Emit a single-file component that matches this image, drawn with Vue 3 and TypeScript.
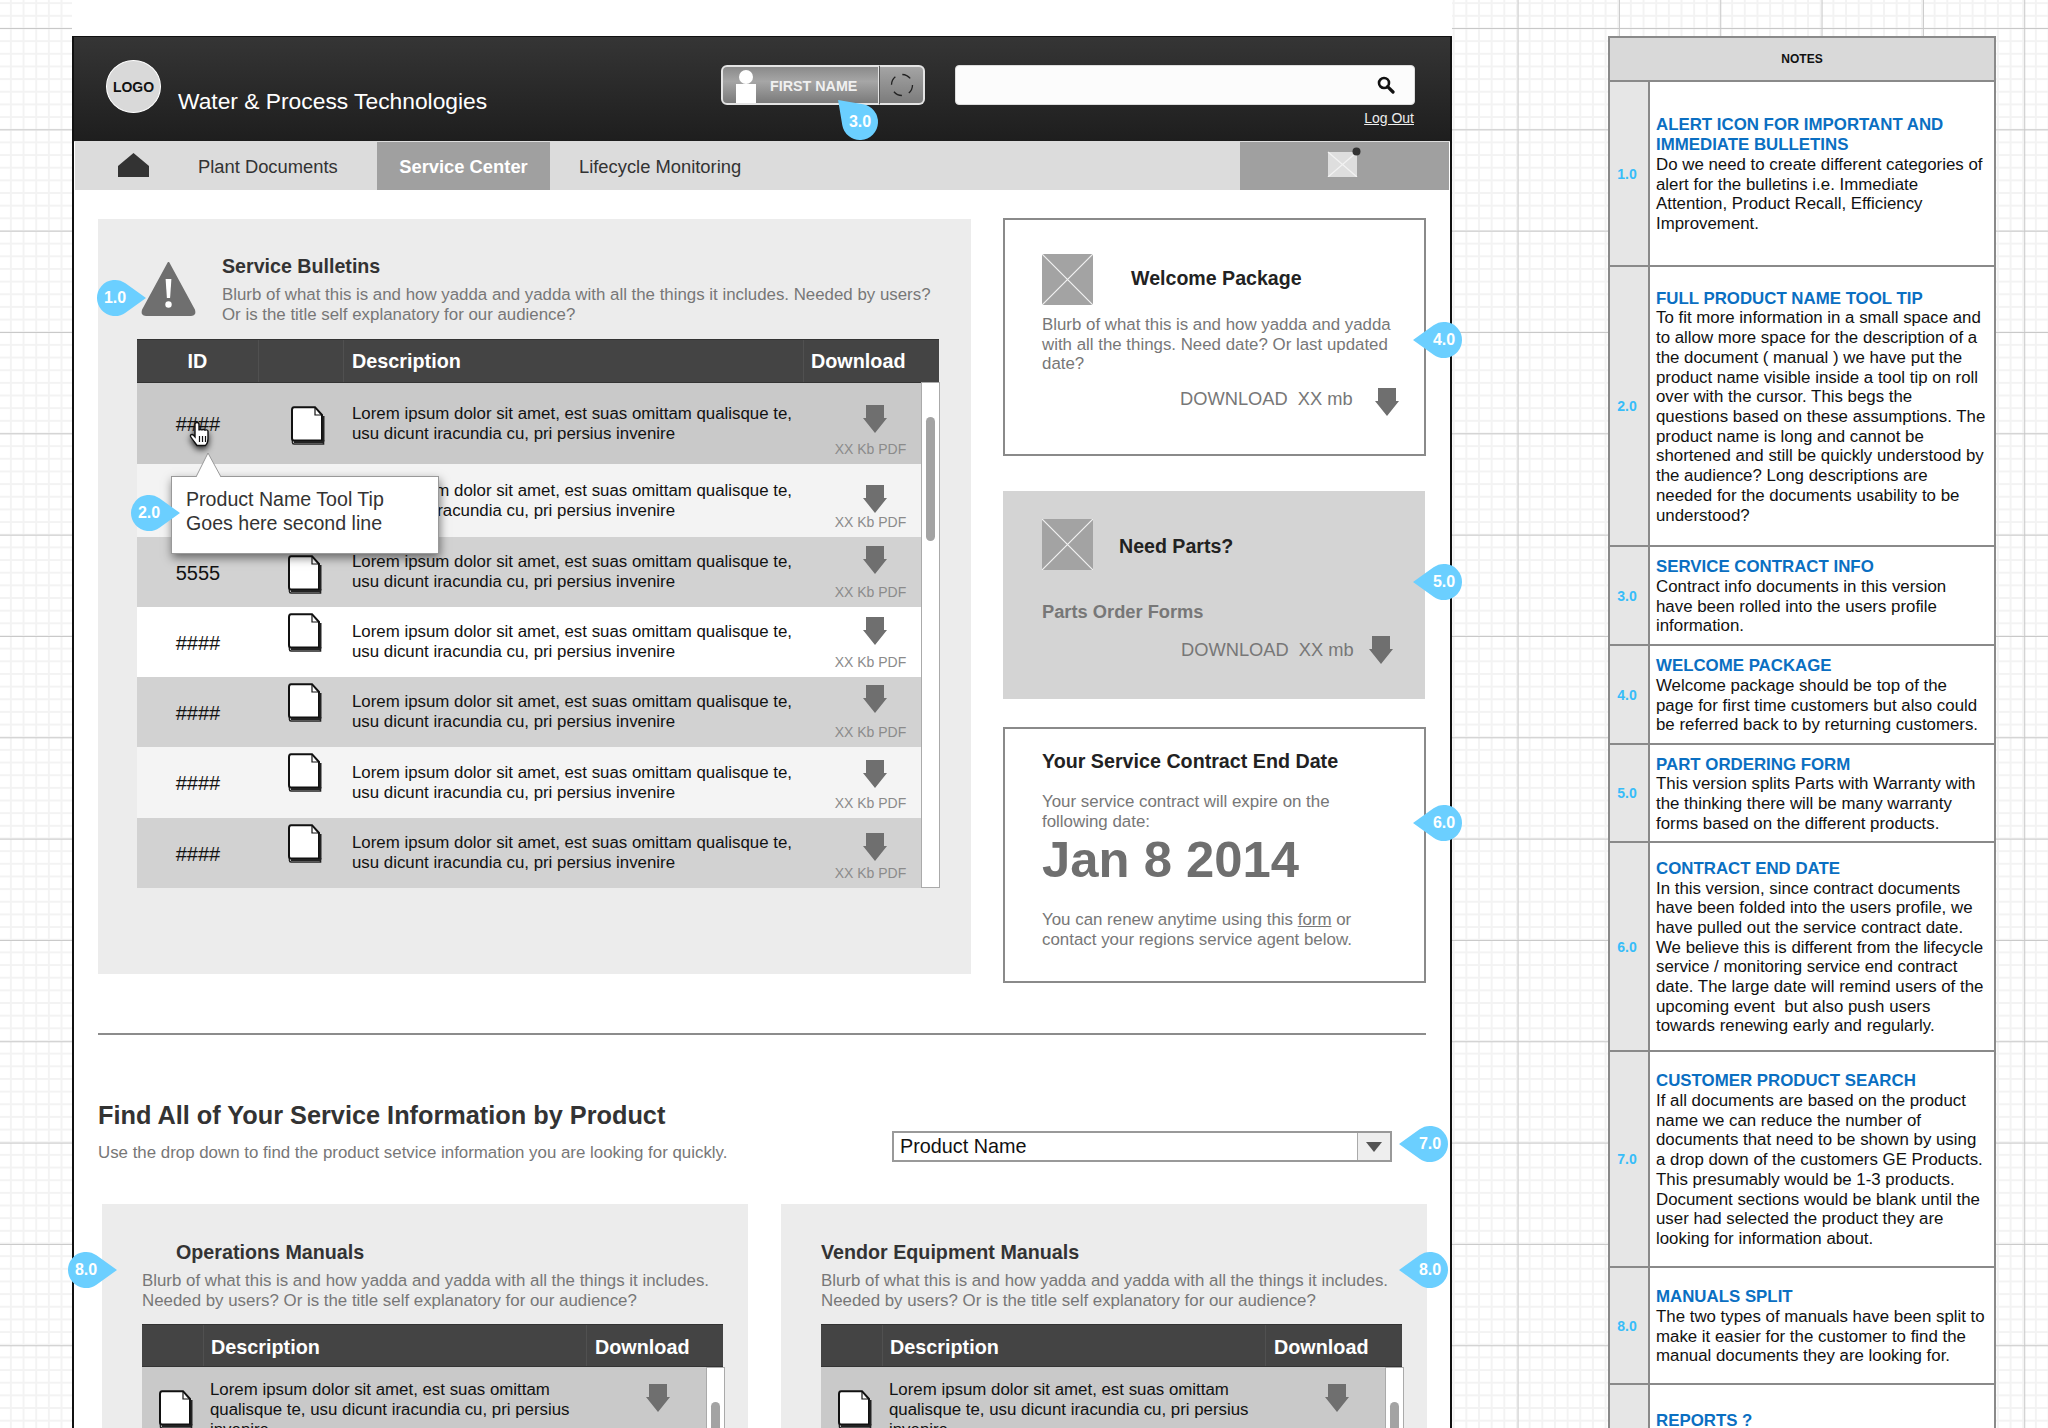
<script setup lang="ts">
interface Row { id: string; bg: string; h: number; doc: number; arrow: number; shift: boolean }
interface Note { n: string; h: number; head: string[]; body: string[] }
interface Badge { label: string; cx: number; cy: number; dir: number }

const rows: Row[] = [
  { id: '####', bg: '#c9c9c9', h: 81, doc: 23, arrow: 22, shift: true },
  { id: '', bg: '#f3f3f3', h: 73, doc: 25, arrow: 21, shift: false },
  { id: '5555', bg: '#d2d2d2', h: 70, doc: 18, arrow: 9, shift: false },
  { id: '####', bg: '#ffffff', h: 70, doc: 6, arrow: 10, shift: false },
  { id: '####', bg: '#d2d2d2', h: 70, doc: 6, arrow: 8, shift: false },
  { id: '####', bg: '#f4f4f4', h: 71, doc: 6, arrow: 13, shift: false },
  { id: '####', bg: '#d2d2d2', h: 70, doc: 6, arrow: 15, shift: false },
]

const notes: Note[] = [
  { n: '1.0', h: 185, head: ['ALERT ICON FOR IMPORTANT AND', 'IMMEDIATE BULLETINS'], body: ['Do we need to create different categories of', 'alert for the bulletins i.e. Immediate', 'Attention, Product Recall, Efficiency', 'Improvement.'] },
  { n: '2.0', h: 280, head: ['FULL PRODUCT NAME TOOL TIP'], body: ['To fit more information in a small space and', 'to allow more space for the description of a', 'the document ( manual ) we have put the', 'product name visible inside a tool tip on roll', 'over with the cursor. This begs the', 'questions based on these assumptions. The', 'product name is long and cannot be', 'shortened and still be quickly understood by', 'the audience? Long descriptions are', 'needed for the documents usability to be', 'understood?'] },
  { n: '3.0', h: 99, head: ['SERVICE CONTRACT INFO'], body: ['Contract info documents in this version', 'have been rolled into the users profile', 'information.'] },
  { n: '4.0', h: 99, head: ['WELCOME PACKAGE'], body: ['Welcome package should be top of the', 'page for first time customers but also could', 'be referred back to by returning customers.'] },
  { n: '5.0', h: 98, head: ['PART ORDERING FORM'], body: ['This version splits Parts with Warranty with', 'the thinking there will be many warranty', 'forms based on the different products.'] },
  { n: '6.0', h: 209, head: ['CONTRACT END DATE'], body: ['In this version, since contract documents', 'have been folded into the users profile, we', 'have pulled out the service contract date.', 'We believe this is different from the lifecycle', 'service / monitoring service end contract', 'date. The large date will remind users of the', 'upcoming event  but also push users', 'towards renewing early and regularly.'] },
  { n: '7.0', h: 216, head: ['CUSTOMER PRODUCT SEARCH'], body: ['If all documents are based on the product', 'name we can reduce the number of', 'documents that need to be shown by using', 'a drop down of the customers GE Products.', 'This presumably would be 1-3 products.', 'Document sections would be blank until the', 'user had selected the product they are', 'looking for information about.'] },
  { n: '8.0', h: 117, head: ['MANUALS SPLIT'], body: ['The two types of manuals have been split to', 'make it easier for the customer to find the', 'manual documents they are looking for.'] },
  { n: '', h: 72, head: ['REPORTS ?'], body: [] },
]

const badges: Badge[] = [
  { label: '1.0', cx: 115, cy: 298, dir: 180 },
  { label: '2.0', cx: 149, cy: 513, dir: 180 },
  { label: '3.0', cx: 860, cy: 122, dir: 45 },
  { label: '4.0', cx: 1444, cy: 340, dir: 0 },
  { label: '5.0', cx: 1444, cy: 582, dir: 0 },
  { label: '6.0', cx: 1444, cy: 823, dir: 0 },
  { label: '7.0', cx: 1430, cy: 1144, dir: 0 },
  { label: '8.0', cx: 1430, cy: 1270, dir: 0 },
  { label: '8.0', cx: 86, cy: 1270, dir: 180 },
]

const manuals = [
  { title: 'Operations Manuals', indent: true },
  { title: 'Vendor Equipment Manuals', indent: false },
]
</script>

<template>
  <div class="page">
    <div class="frame">
      <header class="masthead">
        <div class="logo">LOGO</div>
        <div class="brand">Water &amp; Process Technologies</div>
        <div class="user">
          <div class="user-main">
            <svg class="person" width="20" height="33" viewBox="0 0 20 33"><circle cx="10" cy="7" r="7" fill="#fff" /><rect x="0" y="14" width="20" height="19" fill="#fff" /></svg>
            <span>FIRST NAME</span>
          </div>
          <div class="user-side">
            <svg width="24" height="24" viewBox="0 0 24 24"><circle cx="12" cy="12" r="10.5" fill="none" stroke="#222" stroke-width="1.3" stroke-dasharray="9 7.5" /></svg>
          </div>
        </div>
        <div class="search-col">
          <div class="search">
            <svg width="18" height="18" viewBox="0 0 18 18"><circle cx="7" cy="7" r="5" fill="none" stroke="#111" stroke-width="2.6" /><path d="M10.6 10.6 L16 16" stroke="#111" stroke-width="3.2" stroke-linecap="round" /></svg>
          </div>
          <a class="logout">Log Out</a>
        </div>
      </header>

      <nav class="nav">
        <div class="home">
          <svg width="31" height="24" viewBox="0 0 31 24"><polygon points="15.5,0 31,13 31,24 0,24 0,13" fill="#333" /></svg>
        </div>
        <div class="tab tab-plant">Plant Documents</div>
        <div class="tab tab-active">Service Center</div>
        <div class="tab tab-life">Lifecycle Monitoring</div>
        <div class="mail">
          <svg width="34" height="30" viewBox="0 0 34 30"><rect x="1" y="5" width="29" height="25" fill="#dedede" /><path d="M1 5 L30 30 M30 5 L1 30" stroke="#f2f2f2" stroke-width="1.2" /><circle cx="29.5" cy="4.5" r="4" fill="#333" /></svg>
        </div>
      </nav>

      <main class="content">
        <div class="top-grid">
          <section class="bulletins">
            <div class="b-head">
              <svg class="warn" width="55" height="54" viewBox="0 0 55 54"><path d="M27.5 1 L53 48 Q54.5 53 50 53 L5 53 Q0.5 53 2 48 Z" fill="#6f6f6f" stroke="#6f6f6f" stroke-linejoin="round" stroke-width="2" /><path d="M24.6 17 h5.8 l-1.3 19 h-3.2 Z" fill="#fff" /><circle cx="27.5" cy="42.5" r="3.2" fill="#fff" /></svg>
              <div class="b-text">
                <h2>Service Bulletins</h2>
                <p>Blurb of what this is and how yadda and yadda with all the things it includes. Needed by users?<br />Or is the title self explanatory for our audience?</p>
              </div>
            </div>
            <div class="tbl">
              <div class="thead">
                <div class="th th-id">ID</div>
                <div class="th th-ic"></div>
                <div class="th th-desc">Description</div>
                <div class="th th-dl">Download</div>
              </div>
              <div class="tbody">
                <div class="rows">
                  <div v-for="(r, i) in rows" :key="i" class="row" :style="{ background: r.bg, height: r.h + 'px' }">
                    <div class="cell-id">{{ r.id }}</div>
                    <div class="cell-doc" :class="{ shift: r.shift }">
                      <svg :style="{ marginTop: r.doc + 'px' }" width="34" height="39" viewBox="0 0 34 39"><path d="M1.5 7 V36.5 Q1.5 38 3 38 H32.5 V34" fill="#fff" stroke="#222" stroke-width="1.6" /><path d="M1 4 V32 Q1 34.5 3 34.5 H31 V9 L24 1.2 H3 Q1 1.2 1 4 Z" fill="#fff" stroke="#111" stroke-width="2" /><path d="M24 1.5 V9 H31" fill="none" stroke="#111" stroke-width="1.2" /><path d="M32.5 10 V35.5 M3 36 H32.5" stroke="#222" stroke-width="2" /></svg>
                    </div>
                    <div class="cell-desc">Lorem ipsum dolor sit amet, est suas omittam qualisque te,<br />usu dicunt iracundia cu, pri persius invenire</div>
                    <div class="cell-dl">
                      <svg :style="{ marginTop: r.arrow + 'px' }" width="24" height="28" viewBox="0 0 24 28"><polygon points="3,0 21,0 21,13 24,13 12,28 0,13 3,13" fill="#6f6f6f" /></svg>
                      <span class="size">XX Kb PDF</span>
                    </div>
                  </div>
                </div>
                <div class="scroll"><div class="thumb"></div></div>
              </div>
            </div>

            <div class="tip">
              <svg class="tip-arrow" width="28" height="26" viewBox="0 0 28 26"><path d="M1 25 L13 1 L26 25" fill="#fff" stroke="#999" stroke-width="1" /></svg>
              Product Name Tool Tip<br />Goes here second line
            </div>
            <svg class="hand" width="22" height="26" viewBox="0 0 22 26"><path d="M8 1.5 c1.4 0 2 1 2 2 v6 c0 -1.4 3 -1.4 3 0 c0 -1.4 3 -1.4 3 .2 c.2 -1.2 3 -1.2 3 .6 v7 c0 2.6 -1.4 6.2 -2.6 7.2 h-8.4 c-1.4 -2 -5.2 -7 -6.4 -9 c-.8 -1.6 1.4 -3 3 -1.2 l1.4 1.6 v-12.4 c0 -1 .6 -2 2 -2 z" fill="#fff" stroke="#111" stroke-width="1.4" /><path d="M10.5 15 v6 M13.5 15 v6 M16.5 15 v6" stroke="#111" stroke-width="1.2" /></svg>
          </section>

          <aside class="side">
            <section class="card card-welcome">
              <div class="card-head">
                <svg class="ph" width="51" height="51" viewBox="0 0 51 51"><rect width="51" height="51" fill="#a3a3a3" /><path d="M0 0 L51 51 M51 0 L0 51" stroke="#f2f2f2" stroke-width="1.2" /></svg>
                <h3 class="welcome-t">Welcome Package</h3>
              </div>
              <p class="card-p">Blurb of what this is and how yadda and yadda<br />with all the things. Need date? Or last updated<br />date?</p>
              <div class="dl-line dl-1">
                <span>DOWNLOAD&nbsp; XX mb</span>
                <svg width="24" height="28" viewBox="0 0 24 28"><polygon points="3,0 21,0 21,13 24,13 12,28 0,13 3,13" fill="#6f6f6f" /></svg>
              </div>
            </section>
            <section class="card-parts">
              <div class="card-head">
                <svg class="ph" width="51" height="51" viewBox="0 0 51 51"><rect width="51" height="51" fill="#a3a3a3" /><path d="M0 0 L51 51 M51 0 L0 51" stroke="#f2f2f2" stroke-width="1.2" /></svg>
                <h3 class="parts-t">Need Parts?</h3>
              </div>
              <div class="parts-l">Parts Order Forms</div>
              <div class="dl-line dl-2">
                <span>DOWNLOAD&nbsp; XX mb</span>
                <svg width="24" height="28" viewBox="0 0 24 28"><polygon points="3,0 21,0 21,13 24,13 12,28 0,13 3,13" fill="#6f6f6f" /></svg>
              </div>
            </section>
            <section class="card card-end">
              <h3>Your Service Contract End Date</h3>
              <p class="end-1">Your service contract will expire on the<br />following date:</p>
              <div class="date">Jan 8 2014</div>
              <p class="end-2">You can renew anytime using this <u>form</u> or<br />contact your regions service agent below.</p>
            </section>
          </aside>
        </div>

        <hr class="rule" />

        <div class="finder">
          <div>
            <h1>Find All of Your Service Information by Product</h1>
            <p>Use the drop down to find the product setvice information you are looking for quickly.</p>
          </div>
          <div class="select">
            <span>Product Name</span>
            <div class="caret"><svg width="16" height="10" viewBox="0 0 16 10"><polygon points="0,0 16,0 8,10" fill="#555" /></svg></div>
          </div>
        </div>

        <div class="manuals">
          <section v-for="m in manuals" :key="m.title" class="manual">
            <h2 :class="{ indent: m.indent }">{{ m.title }}</h2>
            <p>Blurb of what this is and how yadda and yadda with all the things it includes.<br />Needed by users? Or is the title self explanatory for our audience?</p>
            <div class="m-tbl">
              <div class="m-head">
                <div class="m-h0"></div>
                <div class="m-h1">Description</div>
                <div class="m-h2">Download</div>
              </div>
              <div class="m-body">
                <div class="m-row">
                  <svg class="m-doc" width="34" height="39" viewBox="0 0 34 39"><path d="M1.5 7 V36.5 Q1.5 38 3 38 H32.5 V34" fill="#fff" stroke="#222" stroke-width="1.6" /><path d="M1 4 V32 Q1 34.5 3 34.5 H31 V9 L24 1.2 H3 Q1 1.2 1 4 Z" fill="#fff" stroke="#111" stroke-width="2" /><path d="M24 1.5 V9 H31" fill="none" stroke="#111" stroke-width="1.2" /><path d="M32.5 10 V35.5 M3 36 H32.5" stroke="#222" stroke-width="2" /></svg>
                  <div class="m-desc">Lorem ipsum dolor sit amet, est suas omittam<br />qualisque te, usu dicunt iracundia cu, pri persius<br />invenire</div>
                  <svg class="m-arrow" width="24" height="28" viewBox="0 0 24 28"><polygon points="3,0 21,0 21,13 24,13 12,28 0,13 3,13" fill="#6f6f6f" /></svg>
                </div>
                <div class="scroll m-scroll"><div class="thumb m-thumb"></div></div>
              </div>
            </div>
          </section>
        </div>
      </main>
    </div>

    <aside class="notes">
      <div class="notes-h">NOTES</div>
      <div v-for="(n, i) in notes" :key="i" class="note" :style="{ height: n.h + 'px' }">
        <div class="note-n">{{ n.n }}</div>
        <div class="note-t">
          <div v-for="h in n.head" :key="h" class="note-head">{{ h }}</div>
          <div v-for="b in n.body" :key="b" class="note-line">{{ b }}</div>
        </div>
      </div>
    </aside>

    <div v-for="(b, i) in badges" :key="i" class="badge" :style="{ left: b.cx - 18 + 'px', top: b.cy - 18 + 'px' }">
      <svg class="badge-s" width="36" height="36" viewBox="0 0 36 36" :style="{ transform: 'rotate(' + b.dir + 'deg)' }"><path d="M-13 18 L7.55 3.35 A18 18 0 1 1 7.55 32.65 Z" fill="#6bcfff" /></svg>
      <span>{{ b.label }}</span>
    </div>
  </div>
</template>

<style>
html, body { margin: 0; padding: 0; background: #fff; overflow: hidden; }
</style>

<style scoped>
* { box-sizing: border-box; }
h1, h2, h3, p { margin: 0; }
.page {
  position: relative;
  width: 2048px;
  height: 1428px;
  overflow: hidden;
  display: flex;
  align-items: flex-start;
  font-family: "Liberation Sans", Arial, sans-serif;
  padding: 36px 0 0 72px;
  background-color: #fff;
  background-image:
    linear-gradient(#c8c8c8 1px, transparent 1px),
    linear-gradient(90deg, #c8c8c8 1px, transparent 1px),
    linear-gradient(#f3f3f3 2px, transparent 2px),
    linear-gradient(90deg, #f3f3f3 2px, transparent 2px);
  background-size: 101.33px 101.33px, 101.33px 101.33px, 12.667px 12.667px, 12.667px 12.667px;
  background-position: 0 28px, 99px 0, 0 27.5px, 98.5px 0;
}
.frame {
  width: 1380px;
  height: 1500px;
  flex: none;
  background: #fff;
  border-left: 2px solid #111;
  border-right: 2px solid #111;
  border-top: 1px solid #111;
  box-shadow: 0 -36px 0 #fff;
}
.masthead {
  height: 105px;
  background: linear-gradient(#353535, #1e1e1e);
  display: flex;
  align-items: flex-start;
  border-bottom: 1px solid #ddd;
}
.logo {
  width: 55px;
  height: 53px;
  margin: 23px 0 0 32px;
  border-radius: 50%;
  background: #d9d9d9;
  border: 1px solid #fff;
  display: flex;
  align-items: center;
  justify-content: center;
  font-weight: 700;
  font-size: 14px;
  color: #111;
  flex: none;
}
.brand {
  margin: 51px 0 0 17px;
  color: #fff;
  font-size: 22.8px;
  line-height: 26px;
  white-space: nowrap;
  width: 543px;
  flex: none;
}
.user {
  margin-top: 28px;
  width: 204px;
  height: 40px;
  display: flex;
  flex: none;
}
.user-main {
  width: 158px;
  border: 2px solid #e4e4e4;
  border-right: 1px solid #e4e4e4;
  border-radius: 6px 0 0 6px;
  background: linear-gradient(#8a8a8a, #a6a6a6 40%, #7a7a7a);
  display: flex;
  align-items: center;
  color: #f0f0f0;
  font-size: 14.3px;
  font-weight: 700;
  padding-left: 13px;
  overflow: hidden;
  white-space: nowrap;
}
.user-main span { padding-top: 2px; }
.person { margin: 5px 14px 0 0; flex: none; align-self: flex-end; }
.user-side {
  width: 46px;
  border: 2px solid #e4e4e4;
  border-left: 1px solid #555;
  border-radius: 0 6px 6px 0;
  background: linear-gradient(#a4a4a4, #7c7c7c);
  display: flex;
  align-items: center;
  justify-content: center;
}
.search-col {
  margin: 28px 0 0 30px;
  width: 460px;
  flex: none;
}
.search {
  height: 40px;
  background: #fcfcfc;
  border: 1px solid #ddd;
  border-radius: 4px;
  display: flex;
  align-items: center;
  justify-content: flex-end;
  padding-right: 19px;
}
.logout {
  display: block;
  text-align: right;
  margin-top: 6px;
  padding-right: 1px;
  font-size: 14px;
  line-height: 15px;
  color: #eee;
  text-decoration: underline;
}
.nav {
  height: 48px;
  margin: 0 1px 0 1px;
  background: #dcdcdc;
  display: flex;
  align-items: stretch;
  font-size: 18.35px;
  color: #333;
}
.home { width: 123px; padding: 11px 0 0 43px; flex: none; }
.tab { display: flex; align-items: center; white-space: nowrap; flex: none; padding-top: 2px; }
.tab-plant { width: 179px; }
.tab-active { width: 173px; background: #a0a0a0; color: #fff; font-weight: 700; justify-content: center; }
.tab-life { padding-left: 29px; width: 690px; }
.mail { flex: 1; background: #a0a0a0; padding: 5px 0 0 87px; }

.content { padding: 29px 24px 0 24px; }
.top-grid { display: flex; gap: 32px; align-items: flex-start; }
.bulletins {
  position: relative;
  width: 873px;
  height: 755px;
  flex: none;
  background: #ececec;
  padding: 43px 32px 0 39px;
}
.b-head { display: flex; height: 77px; }
.warn { margin-top: 0; flex: none; margin-left: 4px; }
.b-text { margin-left: 26px; margin-top: -8px; }
.b-text h2 { font-size: 19.65px; line-height: 24px; color: #333; white-space: nowrap; }
.b-text p { font-size: 16.87px; line-height: 19.5px; color: #777; margin-top: 7px; white-space: nowrap; }
.tbl { width: 802px; }
.thead { display: flex; height: 44px; background: #444; color: #fff; font-weight: 700; font-size: 19.8px; border-top: 1px solid #333; border-bottom: 1px solid #333; }
.th { display: flex; align-items: center; border-right: 1px solid #505050; }
.th-id { width: 122px; justify-content: center; }
.th-ic { width: 85px; }
.th-desc { width: 460px; padding-left: 8px; }
.th-dl { flex: 1; padding-left: 7px; border-right: 0; }
.tbody { display: flex; }
.rows { width: 784px; flex: none; }
.row { display: flex; overflow: hidden; }
.cell-id { width: 122px; flex: none; display: flex; align-items: center; justify-content: center; font-size: 20px; color: #111; padding-top: 2px; }
.cell-doc { width: 85px; flex: none; padding-left: 29px; }
.cell-doc.shift { padding-left: 32px; }
.cell-doc svg { display: block; }
.cell-desc { width: 460px; flex: none; padding-left: 8px; align-self: center; font-size: 16.85px; line-height: 20px; color: #111; white-space: nowrap; }
.cell-dl { flex: 1; display: flex; flex-direction: column; align-items: center; padding: 0 0 7px 0; }
.cell-dl svg { display: block; margin-left: 24px; flex: none; }
.size { margin-top: auto; font-size: 14px; line-height: 16px; color: #8b8b8b; white-space: nowrap; padding-left: 16px; }
.scroll { flex: none; width: 19px; background: #fff; border: 1.5px solid #aaa; border-top-width: 1.5px; margin-top: -1px; }
.thumb { width: 9px; height: 124px; margin: 34px 0 0 3.5px; background: #a3a3a3; border-radius: 5px; }

.tip {
  position: absolute;
  left: 73px;
  top: 257px;
  width: 268px;
  height: 78px;
  background: #fff;
  border: 1.5px solid #999;
  box-shadow: 1px 4px 9px rgba(0,0,0,.5);
  padding: 10px 0 0 14px;
  font-size: 19.6px;
  line-height: 24px;
  color: #333;
  white-space: nowrap;
}
.tip-arrow { position: absolute; left: 23px; top: -25px; }
.hand { position: absolute; left: 91px; top: 202px; filter: drop-shadow(0 3px 3px rgba(0,0,0,.8)); }

.side { width: 423px; flex: none; display: flex; flex-direction: column; margin-top: -1px; }
.card { border: 2px solid #8a8a8a; background: #fff; }
.card-welcome { height: 238px; padding: 34px 0 0 37px; }
.card-head { display: flex; align-items: center; }
.ph { display: block; flex: none; }
.card-head h3 { font-size: 19.6px; color: #222; }
.welcome-t { margin-left: 38px; margin-top: -3px; white-space: nowrap; }
.parts-t { margin-left: 26px; margin-top: 3px; white-space: nowrap; }
.card-p { font-size: 16.87px; line-height: 19.5px; color: #777; margin-top: 10px; white-space: nowrap; }
.dl-line { display: flex; align-items: flex-start; color: #777; font-size: 18.3px; line-height: 22px; white-space: nowrap; }
.dl-1 { margin-top: 14px; padding-left: 138px; }
.dl-1 svg { margin-left: 22px; }
.dl-2 { margin-top: 17px; padding-left: 139px; }
.dl-2 svg { margin-left: 15px; margin-top: -3px; }
.card-parts { margin-top: 35px; height: 208px; width: 422px; background: #d4d4d4; padding: 28px 0 0 39px; }
.parts-l { font-weight: 700; font-size: 18.3px; line-height: 20px; color: #777; margin-top: 32px; white-space: nowrap; }
.card-end { margin-top: 28px; height: 256px; padding: 21px 0 0 37px; }
.card-end h3 { font-size: 19.7px; line-height: 22px; color: #222; white-space: nowrap; }
.end-1, .end-2 { font-size: 16.9px; line-height: 20px; color: #777; white-space: nowrap; }
.end-1 { margin-top: 20px; }
.date { font-size: 50.8px; font-weight: 700; line-height: 56px; color: #6f6f6f; margin-top: 0; white-space: nowrap; }
.end-2 { margin-top: 22px; }

.rule { margin: 50px 0 0 0; border: 0; height: 2px; background: #8c8c8c; }
.finder { display: flex; align-items: flex-start; justify-content: space-between; padding-top: 65px; height: 169px; padding-right: 34px; }
.finder h1 { font-size: 25.3px; line-height: 30px; color: #333; white-space: nowrap; }
.finder p { font-size: 16.88px; line-height: 20px; color: #777; margin-top: 13px; white-space: nowrap; }
.select { width: 500px; height: 31px; margin-top: 31px; border: 2px solid #999; display: flex; align-items: center; background: #fff; font-size: 19.8px; color: #111; padding-left: 6px; }
.select span { flex: 1; }
.caret { width: 33px; height: 100%; background: #eee; border-left: 1px solid #aaa; display: flex; align-items: center; justify-content: center; }

.manuals { display: flex; gap: 33px; padding-left: 4px; }
.manual { width: 646px; height: 300px; background: #ececec; padding: 36px 0 0 40px; flex: none; }
.manual h2 { font-size: 19.7px; line-height: 24px; color: #333; white-space: nowrap; }
.manual h2.indent { padding-left: 34px; }
.manual p { font-size: 16.87px; line-height: 19.5px; color: #777; margin-top: 7px; white-space: nowrap; }
.m-tbl { width: 581px; margin-top: 14px; }
.m-head { height: 43px; display: flex; background: #444; color: #fff; font-weight: 700; font-size: 19.8px; border-top: 1px solid #333; border-bottom: 1px solid #333; }
.m-h0 { width: 62px; border-right: 1px solid #505050; }
.m-h1 { width: 383px; padding: 3px 0 0 7px; display: flex; align-items: center; border-right: 1px solid #505050; }
.m-h2 { flex: 1; padding: 3px 0 0 8px; display: flex; align-items: center; }
.m-body { display: flex; height: 120px; background: #c9c9c9; }
.m-row { width: 564px; display: flex; align-items: flex-start; flex: none; }
.m-doc { margin: 23px 0 0 17px; flex: none; }
.m-desc { margin: 13px 0 0 17px; width: 420px; font-size: 16.85px; line-height: 20px; color: #111; white-space: nowrap; }
.m-arrow { margin: 17px 0 0 16px; flex: none; }
.m-scroll { margin-top: 0; }
.m-thumb { margin-top: 34px; }

.notes { width: 388px; flex: none; margin-left: 156px; border: 2px solid #8a8a8a; border-bottom: 0; background: #fff; }
.notes-h { height: 44px; background: #d9d9d9; border-bottom: 2px solid #8a8a8a; display: flex; align-items: center; justify-content: center; font-size: 12px; font-weight: 700; color: #111; }
.note { display: flex; border-bottom: 2px solid #8a8a8a; }
.note-n { width: 40px; flex: none; background: #e6e6e6; border-right: 2px solid #8a8a8a; display: flex; align-items: center; justify-content: center; color: #37bdf9; font-size: 14px; font-weight: 700; padding-right: 4px; }
.note-t { flex: 1; display: flex; flex-direction: column; justify-content: center; padding: 2px 0 0 6px; }
.note-head { font-size: 16.85px; line-height: 19.7px; font-weight: 700; color: #0a6fc2; white-space: nowrap; }
.note-line { font-size: 16.85px; line-height: 19.7px; color: #111; white-space: pre; }

.badge { position: absolute; width: 36px; height: 36px; display: flex; align-items: center; justify-content: center; color: #fff; font-size: 16px; font-weight: 700; }
.badge-s { position: absolute; left: 0; top: 0; overflow: visible; }
.badge span { position: relative; }
</style>
